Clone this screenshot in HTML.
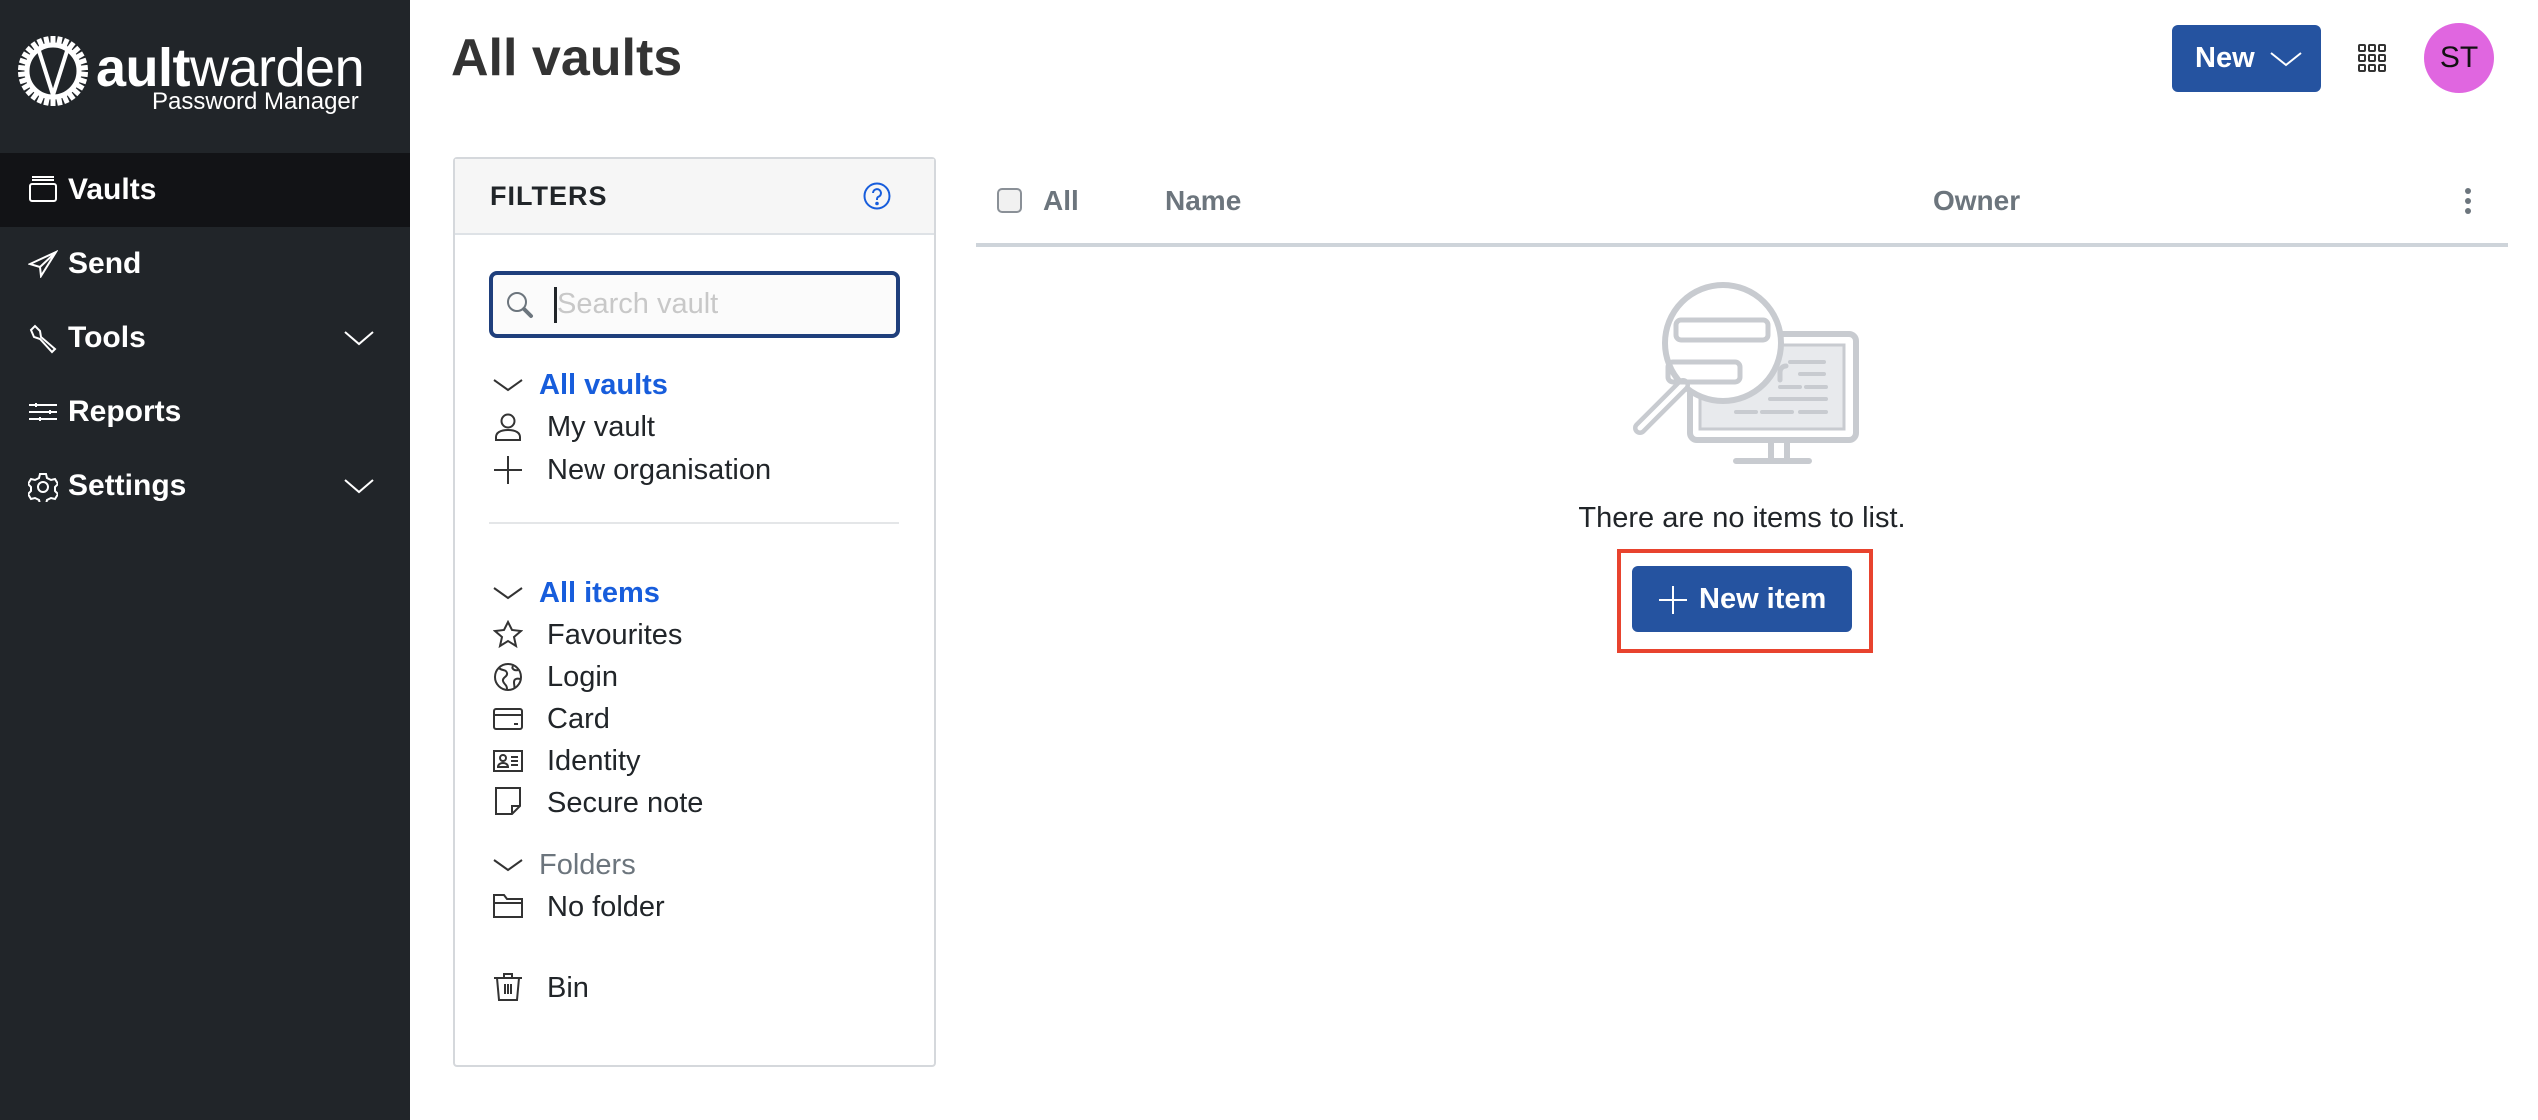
<!DOCTYPE html>
<html><head><meta charset="utf-8"><style>
*{margin:0;padding:0;box-sizing:border-box}
body{width:2538px;height:1120px;position:relative;background:#fff;font-family:"Liberation Sans",sans-serif;overflow:hidden;color:#212529}
.abs{position:absolute}
#side{left:0;top:0;width:410px;height:1120px;background:#212529}
.nav{position:absolute;left:0;width:410px;height:74px;color:#fff;font-weight:bold;font-size:30px;line-height:74px}
.nav span{position:absolute;left:68px}
.nav svg{position:absolute;left:28px;top:23px}
.nav svg.chev{left:343px;top:27px}
.fi{position:absolute;left:547px;font-size:29px;line-height:34px;color:#212529;white-space:nowrap}
.ic{position:absolute;left:493px}
.hd{position:absolute;font-size:28px;font-weight:bold;color:#6c757d;line-height:34px}
</style></head><body>
<div id="side" class="abs">
 <svg class="abs" style="left:17px;top:35px" width="72" height="72" viewBox="0 0 72 72">
  <g fill="#fff">
   <circle cx="36" cy="36" r="26" fill="none" stroke="#fff" stroke-width="5"/>
   <g id="t"><rect x="33.5" y="1" width="5" height="8"/></g>
   <use href="#t" transform="rotate(12 36 36)"/><use href="#t" transform="rotate(24 36 36)"/><use href="#t" transform="rotate(36 36 36)"/><use href="#t" transform="rotate(48 36 36)"/><use href="#t" transform="rotate(60 36 36)"/><use href="#t" transform="rotate(72 36 36)"/><use href="#t" transform="rotate(84 36 36)"/><use href="#t" transform="rotate(96 36 36)"/><use href="#t" transform="rotate(108 36 36)"/><use href="#t" transform="rotate(120 36 36)"/><use href="#t" transform="rotate(132 36 36)"/><use href="#t" transform="rotate(144 36 36)"/><use href="#t" transform="rotate(156 36 36)"/><use href="#t" transform="rotate(168 36 36)"/><use href="#t" transform="rotate(180 36 36)"/><use href="#t" transform="rotate(192 36 36)"/><use href="#t" transform="rotate(204 36 36)"/><use href="#t" transform="rotate(216 36 36)"/><use href="#t" transform="rotate(228 36 36)"/><use href="#t" transform="rotate(240 36 36)"/><use href="#t" transform="rotate(252 36 36)"/><use href="#t" transform="rotate(264 36 36)"/><use href="#t" transform="rotate(276 36 36)"/><use href="#t" transform="rotate(288 36 36)"/><use href="#t" transform="rotate(300 36 36)"/><use href="#t" transform="rotate(312 36 36)"/><use href="#t" transform="rotate(324 36 36)"/><use href="#t" transform="rotate(336 36 36)"/><use href="#t" transform="rotate(348 36 36)"/>
  </g>
  <path d="M22 16 L36 60 L50 16" fill="none" stroke="#fff" stroke-width="4"/>
 </svg>
 <div class="abs" style="left:96px;top:38px;color:#fff;font-size:54px;line-height:60px;letter-spacing:-0.5px"><b>ault</b>warden</div>
 <div class="abs" style="left:152px;top:88px;color:#fff;font-size:24px;line-height:28px">Password Manager</div>

 <div class="nav" style="top:153px;background:#121316"><svg width="30" height="28" viewBox="0 0 30 28" fill="none" stroke="#fff" stroke-width="2"><rect x="2" y="8" width="26" height="17" rx="2"/><path d="M4 4h22M4 1h22"/></svg><span>Vaults</span></div>
 <div class="nav" style="top:227px"><svg width="30" height="28" viewBox="0 0 30 28" fill="none" stroke="#fff" stroke-width="2"><path d="M28 2 L2 14 L12 17 L13 26 Z M12 17 L28 2"/></svg><span>Send</span></div>
 <div class="nav" style="top:301px"><svg width="30" height="30" viewBox="0 0 30 30" fill="none" stroke="#fff" stroke-width="2"><path d="M3 6 L7 2 L12 7 L13 13 L27 25 L24 28 L12 15 L6 13 Z"/></svg><span>Tools</span><svg class="chev" width="32" height="20" viewBox="0 0 32 20"><path d="M2 4 L16 16 L30 4" fill="none" stroke="#fff" stroke-width="2"/></svg></div>
 <div class="nav" style="top:375px"><svg width="30" height="28" viewBox="0 0 30 28" fill="none" stroke="#fff" stroke-width="2"><path d="M1 7h28M1 14h28M1 21h28M8 5v4M22 12v4M12 19v4"/></svg><span>Reports</span></div>
 <div class="nav" style="top:449px"><svg width="30" height="30" viewBox="0 0 30 30" fill="none" stroke="#fff" stroke-width="2"><path d="M12 2h6l1 4 4 2 4-1 3 5-3 3v4l3 3-3 5-4-1-4 2-1 4h-6l-1-4-4-2-4 1-3-5 3-3v-4l-3-3 3-5 4 1 4-2z"/><circle cx="15" cy="15" r="5"/></svg><span>Settings</span><svg class="chev" width="32" height="20" viewBox="0 0 32 20"><path d="M2 4 L16 16 L30 4" fill="none" stroke="#fff" stroke-width="2"/></svg></div>
</div>

<div class="abs" style="left:451px;top:26px;font-size:52px;font-weight:bold;color:#333;line-height:64px">All vaults</div>

<div class="abs" style="left:2172px;top:25px;width:149px;height:67px;background:#2553a0;border-radius:6px;color:#fff;font-weight:bold;font-size:29px;line-height:67px"><span style="position:absolute;left:23px">New</span><svg class="abs" style="left:97px;top:25px" width="34" height="18" viewBox="0 0 34 18"><path d="M2 3 L17 15 L32 3" fill="none" stroke="#fff" stroke-width="2"/></svg></div>
<svg class="abs" style="left:2358px;top:44px" width="28" height="28" viewBox="0 0 28 28" fill="none" stroke="#333" stroke-width="2"><rect x="1" y="1" width="6" height="6" rx="1"/><rect x="11" y="1" width="6" height="6" rx="1"/><rect x="21" y="1" width="6" height="6" rx="1"/><rect x="1" y="11" width="6" height="6" rx="1"/><rect x="11" y="11" width="6" height="6" rx="1"/><rect x="21" y="11" width="6" height="6" rx="1"/><rect x="1" y="21" width="6" height="6" rx="1"/><rect x="11" y="21" width="6" height="6" rx="1"/><rect x="21" y="21" width="6" height="6" rx="1"/></svg>
<div class="abs" style="left:2424px;top:23px;width:70px;height:70px;border-radius:50%;background:#e066e0;color:#111;font-size:30px;line-height:70px;text-align:center">ST</div>

<div class="abs" style="left:453px;top:157px;width:483px;height:910px;border:2px solid #d5d8dc;border-radius:4px;background:#fff"></div>
<div class="abs" style="left:455px;top:159px;width:479px;height:76px;background:#f6f6f6;border-bottom:2px solid #dee2e6"></div>
<div class="abs" style="left:490px;top:180px;font-size:27px;font-weight:bold;letter-spacing:1px;color:#212529;line-height:32px">FILTERS</div>
<svg class="abs" style="left:863px;top:182px" width="28" height="28" viewBox="0 0 28 28" fill="none" stroke="#175ddc" stroke-width="2"><circle cx="14" cy="14" r="12.5"/><path d="M10 11a4 4 0 1 1 5 4c-1 .5-1 1.5-1 3"/><circle cx="14" cy="21.5" r=".8" fill="#175ddc"/></svg>
<div class="abs" style="left:489px;top:271px;width:411px;height:67px;border:4px solid #1f3f7c;border-radius:8px;background:#fbfbfb"></div>
<svg class="abs" style="left:505px;top:290px" width="30" height="30" viewBox="0 0 30 30" fill="none" stroke="#6c757d" stroke-width="2"><circle cx="12" cy="12" r="9"/><path d="M19 19 L26 26" stroke-width="4" stroke-linecap="round"/></svg>
<div class="abs" style="left:554px;top:287px;width:3px;height:36px;background:#212529"></div>
<div class="abs" style="left:557px;top:285px;font-size:29px;color:#c8c8c8;line-height:38px">Search vault</div>

<svg class="ic" style="top:378px" width="30" height="14" viewBox="0 0 30 14"><path d="M1 2 L15 12 L29 2" fill="none" stroke="#333" stroke-width="2"/></svg>
<div class="fi" style="top:368px;left:539px;color:#175ddc;font-weight:bold">All vaults</div>
<svg class="ic" style="top:412px" width="30" height="30" viewBox="0 0 30 30" fill="none" stroke="#333" stroke-width="2"><circle cx="15" cy="9" r="6.5"/><path d="M3 28v-3c0-4 4-7 12-7s12 3 12 7v3z"/></svg>
<div class="fi" style="top:410px">My vault</div>
<svg class="ic" style="top:455px" width="30" height="30" viewBox="0 0 30 30" stroke="#333" stroke-width="2"><path d="M15 1v28M1 15h28"/></svg>
<div class="fi" style="top:453px">New organisation</div>
<div class="abs" style="left:489px;top:522px;width:410px;height:2px;background:#e4e6e8"></div>

<svg class="ic" style="top:586px" width="30" height="14" viewBox="0 0 30 14"><path d="M1 2 L15 12 L29 2" fill="none" stroke="#333" stroke-width="2"/></svg>
<div class="fi" style="top:576px;left:539px;color:#175ddc;font-weight:bold">All items</div>
<svg class="ic" style="top:620px" width="30" height="30" viewBox="0 0 30 30" fill="none" stroke="#333" stroke-width="2"><path d="M15 2l4 8 9 1-7 6 2 9-8-5-8 5 2-9-7-6 9-1z"/></svg>
<div class="fi" style="top:618px">Favourites</div>
<svg class="ic" style="top:662px" width="30" height="30" viewBox="0 0 30 30" fill="none" stroke="#333" stroke-width="2"><circle cx="15" cy="15" r="13"/><path d="M6 6c3 3 7 1 8 5s-5 4-4 8 4 3 4 8M20 4c-2 3 2 5 5 4M27 17c-3-1-6 0-6 3s1 5 0 6"/></svg>
<div class="fi" style="top:660px">Login</div>
<svg class="ic" style="top:707px" width="30" height="24" viewBox="0 0 30 24" fill="none" stroke="#333" stroke-width="2"><rect x="1" y="2" width="28" height="20" rx="2"/><path d="M1 8h28M21 17h4"/></svg>
<div class="fi" style="top:702px">Card</div>
<svg class="ic" style="top:750px" width="30" height="22" viewBox="0 0 30 22" fill="none" stroke="#333" stroke-width="2"><rect x="1" y="1" width="28" height="20"/><circle cx="10" cy="8" r="3"/><path d="M5 17c0-3 3-4 5-4s5 1 5 4zM18 7h7M18 11h7M18 15h7"/></svg>
<div class="fi" style="top:744px">Identity</div>
<svg class="ic" style="top:786px" width="30" height="30" viewBox="0 0 30 30" fill="none" stroke="#333" stroke-width="2"><path d="M3 2h24v18l-8 8H3z M27 20h-8v8"/></svg>
<div class="fi" style="top:786px">Secure note</div>
<svg class="ic" style="top:858px" width="30" height="14" viewBox="0 0 30 14"><path d="M1 2 L15 12 L29 2" fill="none" stroke="#333" stroke-width="2"/></svg>
<div class="fi" style="top:848px;left:539px;color:#6c757d">Folders</div>
<svg class="ic" style="top:893px" width="30" height="26" viewBox="0 0 30 26" fill="none" stroke="#333" stroke-width="2"><path d="M1 2h10l3 4h15v18H1z M1 10h28"/></svg>
<div class="fi" style="top:890px">No folder</div>
<svg class="ic" style="top:972px" width="30" height="30" viewBox="0 0 30 30" fill="none" stroke="#333" stroke-width="2"><path d="M1 6h28M11 6V2h8v4M4 6l2 22h18l2-22M12 12v10M15 12v10M18 12v10"/></svg>
<div class="fi" style="top:971px">Bin</div>

<div class="abs" style="left:997px;top:188px;width:25px;height:25px;border:2px solid #8a9097;border-radius:5px;background:#f1f1f1"></div>
<div class="hd" style="left:1043px;top:184px">All</div>
<div class="hd" style="left:1165px;top:184px">Name</div>
<div class="hd" style="left:1933px;top:184px">Owner</div>
<div class="abs" style="left:2465px;top:188px;width:6px;height:6px;border-radius:50%;background:#6c757d;box-shadow:0 10px 0 #6c757d,0 20px 0 #6c757d"></div>
<div class="abs" style="left:976px;top:243px;width:1532px;height:4px;background:#ced4da"></div>

<svg class="abs" style="left:1620px;top:280px" width="250" height="190" viewBox="1620 280 250 190" fill="none" stroke="#c8cbd0" stroke-width="6" stroke-linecap="round">
 <rect x="1690" y="334" width="166" height="106" rx="7"/>
 <rect x="1700" y="345" width="144" height="84" fill="#e8eaed" stroke-width="3"/>
 <path d="M1771 442v16M1787 442v16M1736 461h73" />
 <path d="M1790 362h34M1800 374h24M1780 387h20M1806 387h20M1770 399h56M1736 412h20M1762 412h30M1800 412h26" stroke-width="4"/>
 <circle cx="1723" cy="343" r="58" fill="#fff"/>
 <path d="M1683 385 L1640 428" stroke-width="14"/>
 <path d="M1683 385 L1640 428" stroke="#fff" stroke-width="5"/>
 <rect x="1676" y="320" width="92" height="20" rx="5" stroke-width="5"/>
 <rect x="1668" y="362" width="72" height="20" rx="5" stroke-width="5"/>
 <path d="M1780 380v-8a6 6 0 0 1 6-6" stroke-width="5"/>
</svg>

<div class="abs" style="left:1542px;top:501px;width:400px;text-align:center;font-size:29px;color:#212529;line-height:34px">There are no items to list.</div>
<div class="abs" style="left:1617px;top:549px;width:256px;height:104px;border:4px solid #e8432e"></div>
<div class="abs" style="left:1632px;top:566px;width:220px;height:66px;background:#2553a0;border-radius:6px;color:#fff;font-weight:bold;font-size:29px;line-height:66px"><svg class="abs" style="left:27px;top:20px" width="28" height="28" viewBox="0 0 28 28" stroke="#fff" stroke-width="2"><path d="M14 0v28M0 14h28"/></svg><span style="position:absolute;left:67px">New item</span></div>
</body></html>
